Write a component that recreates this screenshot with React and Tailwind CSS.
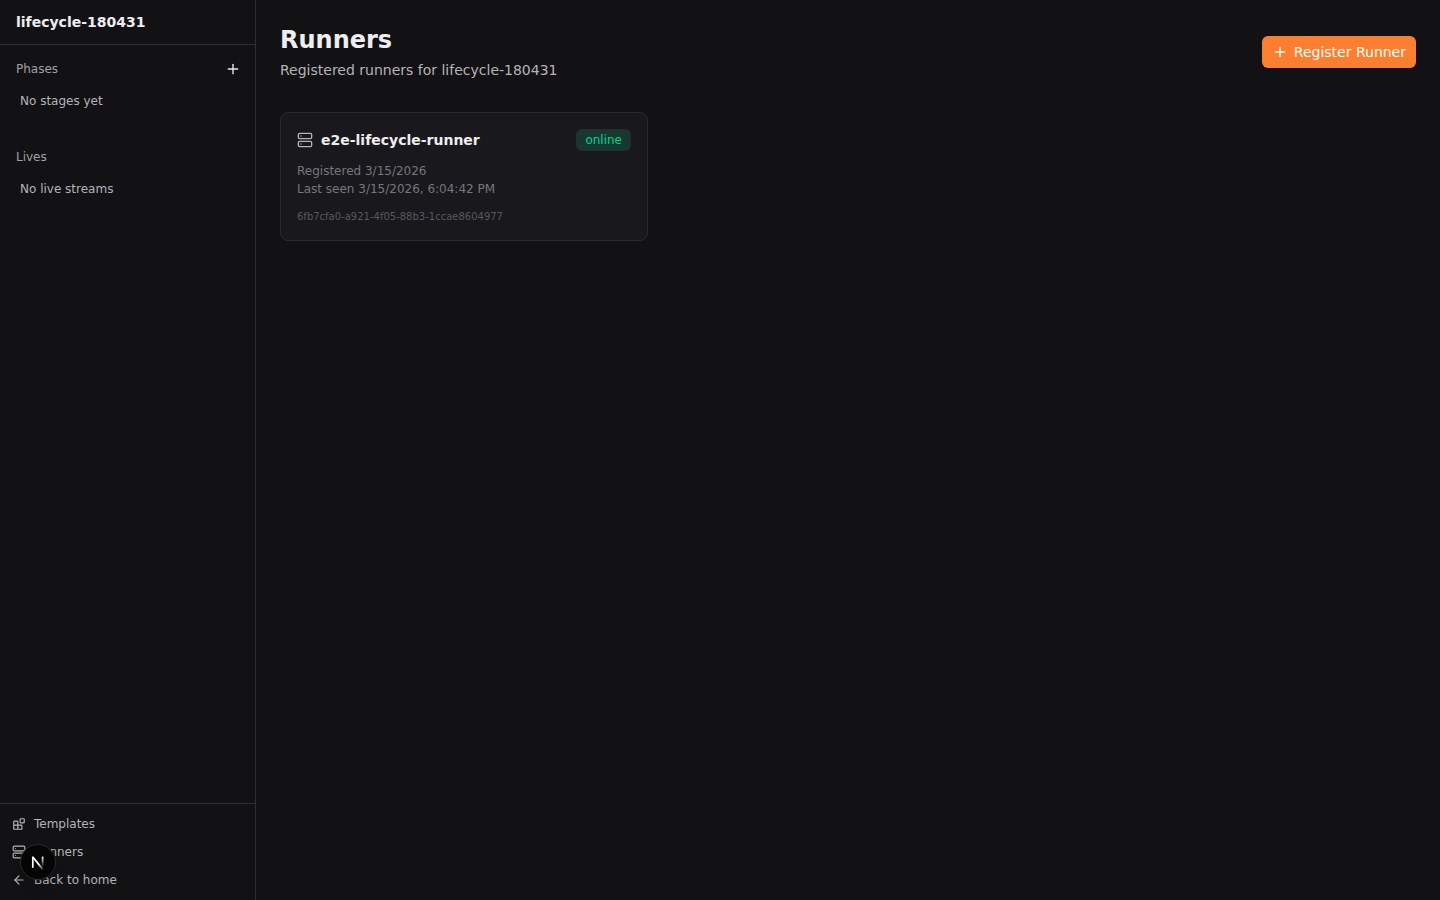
import { ArrowLeft, Plus, Server } from 'lucide-react';

const project = 'lifecycle-180431';

const runners = [
  {
    id: '6fb7cfa0-a921-4f05-88b3-1ccae8604977',
    name: 'e2e-lifecycle-runner',
    status: 'online',
    registered: '3/15/2026',
    lastSeen: '3/15/2026, 6:04:42 PM',
  },
];

function BlocksIcon({ size = 24 }) {
  return (
    <svg
      width={size}
      height={size}
      viewBox="0 0 24 24"
      fill="none"
      stroke="currentColor"
      strokeWidth="2"
      strokeLinecap="round"
      strokeLinejoin="round"
    >
      <rect width="7" height="7" x="14" y="3" rx="1" />
      <path d="M10 21V8a1 1 0 0 0-1-1H4a1 1 0 0 0-1 1v12a1 1 0 0 0 1 1h12a1 1 0 0 0 1-1v-5a1 1 0 0 0-1-1H3" />
    </svg>
  );
}

const footerLinks = [
  { label: 'Templates', icon: BlocksIcon },
  { label: 'Runners', icon: Server },
  { label: 'Back to home', icon: ArrowLeft },
];

function SidebarGroup({ title, empty, action }) {
  return (
    <section className="p-2">
      <div className="flex h-8 items-center justify-between pl-2 pr-1">
        <h2 className="text-[#a1a1a5]">{title}</h2>
        {action}
      </div>
      <p className="px-3 py-2">{empty}</p>
    </section>
  );
}

function Sidebar() {
  return (
    <aside className="flex w-64 shrink-0 flex-col border-r border-[#2e2e31] text-xs text-[#b4b4b8]">
      <div className="border-b border-[#2e2e31] px-4 py-3 text-sm font-semibold text-[#eeeef0]">
        {project}
      </div>

      <div className="flex flex-1 flex-col gap-2">
        <SidebarGroup
          title="Phases"
          empty="No stages yet"
          action={
            <button aria-label="Add phase" className="flex size-5 items-center justify-center text-[#eeeef0]">
              <Plus size={16} />
            </button>
          }
        />
        <SidebarGroup title="Lives" empty="No live streams" />
      </div>

      <nav className="flex flex-col gap-1 border-t border-[#2e2e31] p-2">
        {footerLinks.map(({ label, icon: Icon }) => (
          <a key={label} href="#" className="flex h-6 items-center gap-2 px-1">
            <Icon size={14} /> {label}
          </a>
        ))}
      </nav>
    </aside>
  );
}

function RunnerCard({ runner }) {
  return (
    <article className="rounded-lg border border-[#2b2b2e] bg-[#19191d] p-4">
      <div className="flex items-center justify-between">
        <div className="flex items-center gap-2 text-sm font-semibold text-[#eeeef0]">
          <Server size={16} className="text-[#b4b4b8]" />
          <h2>{runner.name}</h2>
        </div>
        <span className="rounded-md border border-[#2b2b2e] bg-[#16382f] px-2 py-0.5 text-xs text-[#00d492]">
          {runner.status}
        </span>
      </div>
      <div className="mt-3 flex flex-col gap-0.5 text-xs text-[#77777b]">
        <p>Registered {runner.registered}</p>
        <p>Last seen {runner.lastSeen}</p>
      </div>
      <p className="mt-3 text-[10px] leading-[15px] text-[#58585c]">{runner.id}</p>
    </article>
  );
}

// floating dev tools button in the corner
function DevBadge() {
  return (
    <button
      aria-label="Open Next.js Dev Tools"
      className="fixed bottom-5 left-5 flex size-9 items-center justify-center rounded-full border border-[#29292b] bg-[#050505] shadow-lg"
    >
      <svg width="34" height="34" viewBox="0 0 34 34" fill="none">
        <defs>
          <linearGradient id="diagonal" x1="18" y1="19" x2="23" y2="25" gradientUnits="userSpaceOnUse">
            <stop stopColor="white" />
            <stop offset="1" stopColor="white" stopOpacity="0" />
          </linearGradient>
          <linearGradient id="stem" x1="21" y1="12" x2="21" y2="22" gradientUnits="userSpaceOnUse">
            <stop stopColor="white" />
            <stop offset="1" stopColor="white" stopOpacity="0" />
          </linearGradient>
        </defs>
        <path d="M11.8 12L22 24.6" stroke="url(#diagonal)" strokeWidth="1.8" />
        <path d="M11.8 22.8V11.6" stroke="white" strokeWidth="1.7" />
        <path d="M21.6 11.6V22.8" stroke="url(#stem)" strokeWidth="1.7" />
      </svg>
    </button>
  );
}

export default function App() {
  return (
    <div className="flex min-h-screen bg-[#121214] font-['DejaVu_Sans',sans-serif]">
      <Sidebar />

      <main className="flex-1 p-6">
        <header className="mb-8 flex items-center justify-between">
          <div>
            <h1 className="text-2xl font-bold text-[#eeeef0]">Runners</h1>
            <p className="mt-1 text-sm text-[#b4b4b8]">Registered runners for {project}</p>
          </div>
          <button className="flex h-8 items-center gap-1.5 rounded-md bg-[#fb7f2e] px-2.5 text-sm text-white">
            <Plus size={16} /> Register Runner
          </button>
        </header>

        <div className="grid grid-cols-3 gap-4">
          {runners.map((runner) => (
            <RunnerCard key={runner.id} runner={runner} />
          ))}
        </div>
      </main>

      <DevBadge />
    </div>
  );
}
